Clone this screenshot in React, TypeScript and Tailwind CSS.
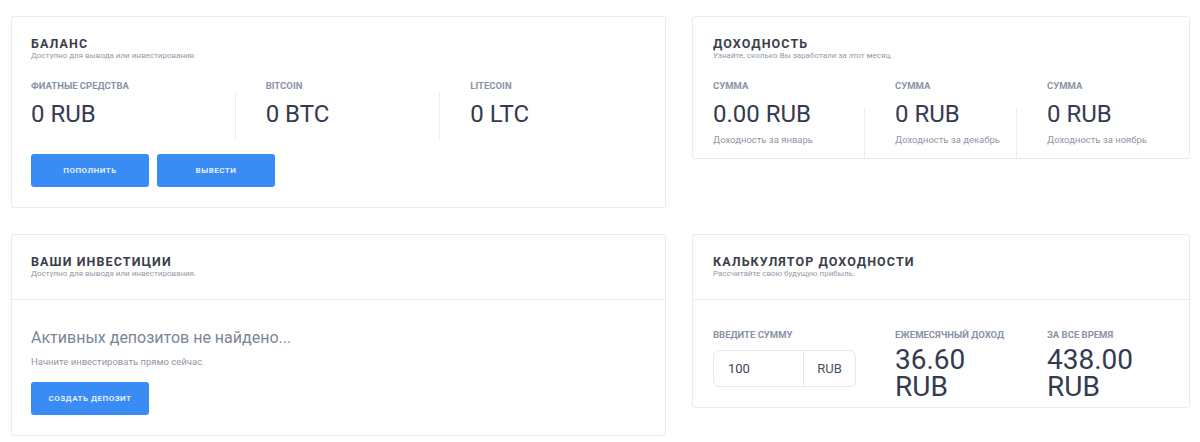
import React from "react";

function CardHeader({ title, subtitle }: { title: string; subtitle: string }) {
  return (
    <div>
      <h3 className="text-[12.5px] leading-[13px] font-bold tracking-[1.1px] text-[#3b3e4a] uppercase">{title}</h3>
      <p className="text-[8px] leading-[11px] text-[#9299a8]">{subtitle}</p>
    </div>
  );
}

function Label({ children }: { children: React.ReactNode }) {
  return <div className="text-[9.5px] leading-[12px] font-bold text-[#8992a7] uppercase">{children}</div>;
}

function BlueButton({ children }: { children: React.ReactNode }) {
  return (
    <button className="w-[118px] h-[33px] rounded-[3px] bg-[#3a8cf5] text-[8px] font-bold tracking-[0.5px] text-[#e6eefc] uppercase">
      {children}
    </button>
  );
}

export default function App() {
  const balance = [
    { label: "Фиатные средства", value: "0 RUB" },
    { label: "Bitcoin", value: "0 BTC" },
    { label: "Litecoin", value: "0 LTC" },
  ];
  const income = [
    { value: "0.00 RUB", sub: "Доходность за январь" },
    { value: "0 RUB", sub: "Доходность за декабрь" },
    { value: "0 RUB", sub: "Доходность за ноябрь" },
  ];
  return (
    <div className="min-h-[442px] bg-white pl-[11px] pt-[16px] font-[Roboto,sans-serif]">
      <div className="grid grid-cols-[655px_498px] gap-x-[26px] gap-y-[26px] items-start">
        {/* Balance */}
        <div className="border border-[#e8eaef] rounded-[3px] bg-white p-[20px] pl-[19px]">
          <CardHeader title="Баланс" subtitle="Доступно для вывода или инвестирования." />
          <div className="mt-[19px] grid grid-cols-3">
            {balance.map((b, i) => (
              <div key={b.label} className={i > 0 ? "pl-[30px]" : ""}>
                <Label>{b.label}</Label>
                <div className={`pt-[8px] pb-[13px] ${i < 2 ? "border-r border-[#eceef2]" : ""}`}>
                  <div className="text-[24px] leading-[28px] text-[#343b51]">{b.value}</div>
                </div>
              </div>
            ))}
          </div>
          <div className="mt-[13px] flex gap-[8px]">
            <BlueButton>Пополнить</BlueButton>
            <BlueButton>Вывести</BlueButton>
          </div>
        </div>

        {/* Income */}
        <div className="border border-[#e8eaef] rounded-[3px] bg-white px-[20px] pt-[20px]">
          <CardHeader title="Доходность" subtitle="Узнайте, сколько Вы заработали за этот месяц." />
          <div className="mt-[19px] grid grid-cols-3">
            {income.map((c, i) => (
              <div key={c.sub} className="flex flex-col">
                <div className={i > 0 ? "pl-[30px]" : ""}>
                  <Label>Сумма</Label>
                </div>
                <div className={`mt-[16px] pb-[12px] ${i > 0 ? "pl-[30px]" : ""} ${i < 2 ? "border-r border-[#eceef2]" : ""}`}>
                  <div className="text-[24px] leading-[12px] text-[#343b51] whitespace-nowrap">{c.value}</div>
                  <div className="mt-[14px] text-[9.5px] leading-[12px] text-[#8f96a4]">{c.sub}</div>
                </div>
              </div>
            ))}
          </div>
        </div>

        {/* Investments */}
        <div className="border border-[#e8eaef] rounded-[3px] bg-white">
          <div className="p-[20px] pl-[19px] border-b border-[#e8eaef]">
            <CardHeader title="Ваши инвестиции" subtitle="Доступно для вывода или инвестирования." />
          </div>
          <div className="pl-[19px] pr-[20px] pt-[28px] pb-[20px]">
            <h4 className="text-[16px] leading-[20px] text-[#7b8699]">Активных депозитов не найдено...</h4>
            <p className="mt-[8px] text-[9.5px] leading-[12px] text-[#8f96a4]">Начните инвестировать прямо сейчас.</p>
            <div className="mt-[14px]">
              <BlueButton>Создать депозит</BlueButton>
            </div>
          </div>
        </div>

        {/* Calculator */}
        <div className="border border-[#e8eaef] rounded-[3px] bg-white">
          <div className="p-[20px] border-b border-[#e8eaef]">
            <CardHeader title="Калькулятор доходности" subtitle="Рассчитайте свою будущую прибыль." />
          </div>
          <div className="px-[20px] pt-[29px] pb-[7px] grid grid-cols-3 items-start">
            <div>
              <Label>Введите сумму</Label>
              <div className="mt-[9px] flex h-[37px] w-[143px] rounded-[6px] border border-[#e6e8ee] text-[13px] text-[#3d4152]">
                <div className="flex-1 flex items-center pl-[14px]">100</div>
                <div className="w-[52px] flex items-center justify-center border-l border-[#e6e8ee] text-[#4a5063]">RUB</div>
              </div>
            </div>
            <div className="pl-[30px]">
              <Label>Ежемесячный доход</Label>
              <div className="mt-[5px] text-[28px] leading-[27px] text-[#343b51]">
                <span className="block">36.60</span>
                <span className="block">RUB</span>
              </div>
            </div>
            <div className="pl-[30px]">
              <Label>За все время</Label>
              <div className="mt-[5px] text-[28px] leading-[27px] text-[#343b51]">
                <span className="block">438.00</span>
                <span className="block">RUB</span>
              </div>
            </div>
          </div>
        </div>
      </div>
    </div>
  );
}
